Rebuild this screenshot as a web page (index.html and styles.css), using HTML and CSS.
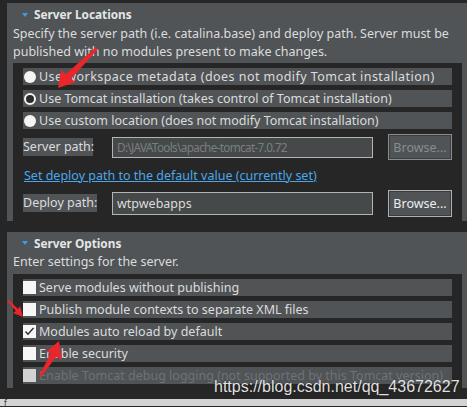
FILE: index.html
```html
<!DOCTYPE html>
<html>
<head>
<meta charset="utf-8">
<link rel="stylesheet" href="styles.css">
</head>
<body>
<div class="page">
  <section class="panel panel-loc">
    <div class="head"><span class="tri"></span><span class="title">Server Locations</span></div>
    <div class="desc">Specify the server path (i.e. catalina.base) and deploy path. Server must be<br>published with no modules present to make changes.</div>
    <div class="group">
      <div class="row"><span class="radio"></span><span class="wide">Use workspace metadata (does not modify Tomcat installation)</span></div>
      <div class="row"><span class="radio sel"></span><span>Use Tomcat installation (takes control of Tomcat installation)</span></div>
      <div class="row"><span class="radio"></span><span>Use custom location (does not modify Tomcat installation)</span></div>
      <div class="field f1">
        <span class="label">Server path:</span>
        <span class="input dis">D:\JAVATools\apache-tomcat-7.0.72</span>
        <span class="btn dis">Browse...</span>
      </div>
      <div class="linkrow"><span class="link">Set deploy path to the default value (currently set)</span></div>
      <div class="field f2">
        <span class="label">Deploy path:</span>
        <span class="input">wtpwebapps</span>
        <span class="btn">Browse...</span>
      </div>
    </div>
  </section>
  <section class="panel panel-opt">
    <div class="head"><span class="tri"></span><span class="title">Server Options</span></div>
    <div class="desc">Enter settings for the server.</div>
    <div class="group">
      <div class="row"><span class="cb"></span><span>Serve modules without publishing</span></div>
      <div class="row"><span class="cb"></span><span>Publish module contexts to separate XML files</span></div>
      <div class="row"><span class="cb on"><svg width="13" height="13" viewBox="0 0 13 13"><path d="M2.5 6.5 L5 9.2 L10.5 3" fill="none" stroke="#2a2a2a" stroke-width="1.4"/></svg></span><span>Modules auto reload by default</span></div>
      <div class="row"><span class="cb"></span><span>Enable security</span></div>
      <div class="row off"><span class="cb"></span><span>Enable Tomcat debug logging (not supported by this Tomcat version)</span></div>
    </div>
  </section>
  <div class="bottom"><span class="mark">f</span></div>
</div>
<div class="watermark">https://blog.csdn.net/qq_43672627</div>
<svg class="arrows" width="467" height="407" viewBox="0 0 467 407">
  <path d="M58 88 L61 70 L66 74 L96 47 L98 49 L71 79 L76 82 Z" fill="#e8262b"/>
  <path d="M23 317 L13 313 L16 311 L7 301 L9 300 L18 309 L20 306 Z" fill="#e8262b"/>
  <path d="M59 341 L62 360 L56 357 L41 377 L39 376 L51 353 L46 352 Z" fill="#e8262b"/>
</svg>
</body>
</html>
```
FILE: styles.css
```css
html, body {
  margin: 0;
  padding: 0;
}
body {
  background: #262626;
  width: 467px;
  height: 407px;
  overflow: hidden;
  position: relative;
  font-family: "Noto Sans", "Open Sans", sans-serif;
  font-size: 12.5px;
  color: #dcdcdc;
}
.page {
  padding-top: 3px;
  display: flex;
  flex-direction: column;
}
.panel {
  margin-left: 7px;
  background: #505457;
  display: flex;
  flex-direction: column;
}
.panel-opt {
  margin-top: 11px;
}
.head {
  height: 22px;
  display: flex;
  align-items: center;
  padding-left: 15px;
}
.panel-opt .head {
  height: 21px;
}
.tri {
  width: 0;
  height: 0;
  border-left: 3.5px solid transparent;
  border-right: 3.5px solid transparent;
  border-top: 4px solid #3d9be0;
  margin-right: 6px;
  margin-top: 1px;
}
.title {
  font-weight: bold;
  font-size: 11.8px;
  color: #e6e6e6;
}
.desc {
  padding-left: 6px;
  line-height: 18px;
  white-space: nowrap;
}
.group {
  margin: 2px 5px 0 6px;
  background: #262626;
  padding: 5px 10px 5px 10px;
  display: flex;
  flex-direction: column;
  gap: 5px;
}
.panel-opt .group {
  margin-top: 3px;
  padding-bottom: 4px;
}
.row {
  height: 17px;
  background: #505457;
  display: flex;
  align-items: center;
  white-space: nowrap;
}
.wide {
  letter-spacing: 0.45px;
}
.radio {
  width: 12px;
  height: 12px;
  border-radius: 50%;
  background: #f4f4f4;
  margin: 0 3px 0 1px;
  box-sizing: border-box;
  flex: none;
}
.radio.sel {
  background: #2b2b2b;
  border: 2px solid #f4f4f4;
}
.cb {
  width: 13px;
  height: 13px;
  background: #f6f6f6;
  margin-right: 3px;
  flex: none;
  display: flex;
}
.row.off {
  color: #6e7275;
}
.row.off .cb {
  background: #d2d2d2;
}
.field {
  display: flex;
  align-items: center;
  height: 26px;
}
.label {
  background: #505457;
  height: 18px;
  line-height: 18px;
  width: 70px;
  white-space: nowrap;
}
.f2 .label {
  width: 74px;
}
.input {
  margin-left: 19px;
  width: 261px;
  height: 21px;
  box-sizing: border-box;
  border: 1px solid #b4b4b4;
  background: #45494a;
  padding-left: 4px;
  line-height: 19px;
  white-space: nowrap;
  overflow: hidden;
}
.f2 .input {
  margin-left: 15px;
  height: 23px;
  line-height: 21px;
}
.input.dis {
  color: #7a7e80;
  font-size: 11.8px;
  letter-spacing: -0.7px;
}
.btn {
  margin-left: auto;
  width: 64px;
  height: 26px;
  box-sizing: border-box;
  border: 1px solid #b0b0b0;
  box-shadow: inset 0 0 0 1px #3a3d3f;
  background: #505457;
  display: flex;
  align-items: center;
  justify-content: center;
  color: #eeeeee;
}
.f2 .btn {
  height: 27px;
}
.btn.dis {
  color: #888c8e;
  border-color: #8a8c8e;
}
.linkrow {
  height: 20px;
  display: flex;
  align-items: center;
  padding-left: 1px;
}
.link {
  color: #4aa8ea;
  text-decoration: underline;
  white-space: nowrap;
}
.bottom {
  margin-top: 11px;
  height: 7px;
  background: #d3d3d3;
  position: relative;
}
.mark {
  font-size: 8px;
  line-height: 7px;
  color: #333;
  padding-left: 4px;
  display: block;
}
.watermark {
  position: absolute;
  left: 214px;
  top: 378px;
  font-family: "Liberation Sans", Arial, sans-serif;
  font-size: 16px;
  color: rgba(255, 255, 255, 0.88);
  white-space: nowrap;
  text-shadow: 0 0 1px rgba(0, 0, 0, 0.4);
}
.arrows {
  position: absolute;
  left: 0;
  top: 0;
  pointer-events: none;
}
```
